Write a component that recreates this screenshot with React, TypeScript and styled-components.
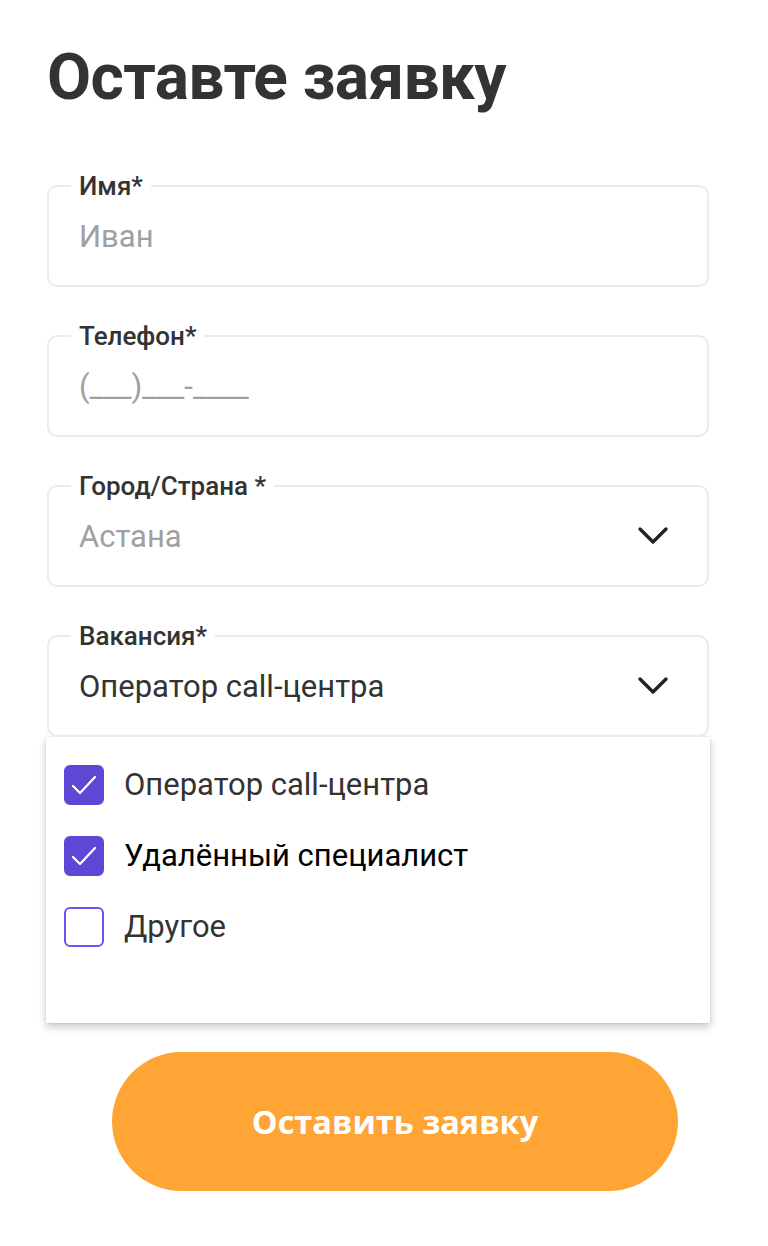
import React from "react";
import styled, { createGlobalStyle } from "styled-components";

const Global = createGlobalStyle`
  html, body { margin: 0; padding: 0; background: #ffffff; }
  body { font-family: Roboto, "Liberation Sans", sans-serif; }
  * { box-sizing: border-box; }
`;

const Page = styled.div`
  padding: 40px 59px 40px 47px;
  display: flex;
  flex-direction: column;
`;

const Title = styled.h1`
  margin: 0 0 68px;
  font-family: Roboto, "Liberation Sans", sans-serif;
  font-weight: 700;
  font-size: 64px;
  line-height: 1.2;
  color: #333333;
  letter-spacing: -0.65px;
`;

const Fields = styled.div`
  display: flex;
  flex-direction: column;
  gap: 48px;
`;

const FieldBox = styled.div`
  position: relative;
  height: 102px;
  border: 2px solid #ebebeb;
  border-radius: 10px;
  display: flex;
  align-items: center;
  padding: 0 38px 0 30px;
`;

const Label = styled.span`
  position: absolute;
  top: -16px;
  left: 22px;
  padding: 0 8px;
  background: #ffffff;
  font-size: 26px;
  line-height: 30px;
  font-weight: 500;
  color: #333333;
`;

const Value = styled.span<{ $muted?: boolean }>`
  flex: 1;
  font-size: 31px;
  line-height: 36px;
  font-weight: 400;
  color: ${(p) => (p.$muted ? "#a0a0a0" : "#333333")};
  margin-top: 2px;
`;

const Chevron = () => (
  <svg width="32" height="20" viewBox="0 0 32 20" fill="none">
    <path d="M3 3 L16 16 L29 3" stroke="#222222" strokeWidth="3.4" strokeLinecap="round" strokeLinejoin="round" />
  </svg>
);

const Dropdown = styled.div`
  margin: 0 -1px;
  background: #ffffff;
  box-shadow: 0 4px 8px rgba(0, 0, 0, 0.22), 0 0 2px rgba(0, 0, 0, 0.12);
  padding: 28px 18px 76px;
  display: flex;
  flex-direction: column;
  gap: 31px;
`;

const Option = styled.label`
  display: flex;
  align-items: center;
  gap: 20px;
`;

const Box = styled.span<{ $checked?: boolean }>`
  width: 40px;
  height: 40px;
  flex: none;
  border-radius: 6px;
  background: ${(p) => (p.$checked ? "#5c48d4" : "#ffffff")};
  border: 2px solid ${(p) => (p.$checked ? "#5c48d4" : "#6a55f0")};
  display: flex;
  align-items: center;
  justify-content: center;
`;

const OptionText = styled.span<{ $dark?: boolean }>`
  font-size: 31px;
  line-height: 36px;
  color: ${(p) => (p.$dark ? "#000000" : "#333333")};
`;

const Tick = () => (
  <svg width="28" height="24" viewBox="0 0 28 24" fill="none">
    <path d="M3 13 L10 20 L25 4" stroke="#ffffff" strokeWidth="2.2" strokeLinecap="round" strokeLinejoin="round" />
  </svg>
);

const Submit = styled.button`
  margin: 29px 0 0 65px;
  width: 566px;
  height: 139px;
  border: none;
  border-radius: 70px;
  background: #ffa535;
  color: #ffffff;
  font-family: "Open Sans", "Noto Sans", sans-serif;
  font-weight: 700;
  font-size: 32.5px;
  cursor: pointer;
`;

type Opt = { text: string; checked: boolean; dark?: boolean };

const options: Opt[] = [
  { text: "Оператор call-центра", checked: true },
  { text: "Удалённый специалист", checked: true, dark: true },
  { text: "Другое", checked: false },
];

export default function App() {
  return (
    <>
      <Global />
      <Page>
        <Title>Оставте заявку</Title>
        <Fields>
          <FieldBox>
            <Label>Имя*</Label>
            <Value $muted>Иван</Value>
          </FieldBox>
          <FieldBox>
            <Label>Телефон*</Label>
            <Value $muted>(___)___-____</Value>
          </FieldBox>
          <FieldBox>
            <Label>Город/Страна *</Label>
            <Value $muted>Астана</Value>
            <Chevron />
          </FieldBox>
          <div>
            <FieldBox>
              <Label>Вакансия*</Label>
              <Value>Оператор call-центра</Value>
              <Chevron />
            </FieldBox>
            <Dropdown>
              {options.map((o) => (
                <Option key={o.text}>
                  <Box $checked={o.checked}>{o.checked && <Tick />}</Box>
                  <OptionText $dark={o.dark}>{o.text}</OptionText>
                </Option>
              ))}
            </Dropdown>
          </div>
        </Fields>
        <Submit>Оставить заявку</Submit>
      </Page>
    </>
  );
}
